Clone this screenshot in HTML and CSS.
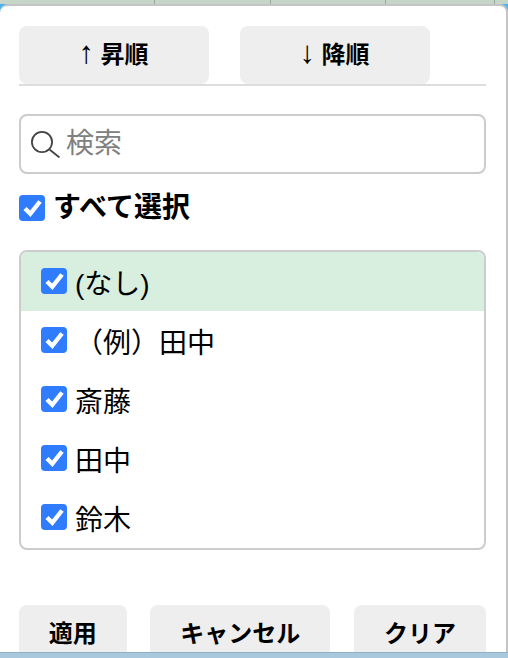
FILE: index.html
```html
<!DOCTYPE html>
<html lang="ja">
<head>
<meta charset="utf-8">
<title>フィルター</title>
<link rel="stylesheet" href="styles.css">
</head>
<body>
<div class="grid-strip">
  <span class="cell c1"></span><span class="cell c2"></span><span class="cell c3"></span><span class="cell c4"></span><span class="cell c5"></span>
</div>
<main class="panel">
  <div class="sort-row">
    <button class="btn sort-btn"><span class="arrow">↑</span> 昇順</button>
    <button class="btn sort-btn"><span class="arrow">↓</span> 降順</button>
  </div>
  <label class="search">
    <svg class="search-icon" viewBox="0 0 30 28" width="30" height="28" aria-hidden="true">
      <circle cx="11" cy="12" r="10.1" fill="none" stroke="#444" stroke-width="1.8"/>
      <path d="M18.5 19.5L28.5 27.5" fill="none" stroke="#444" stroke-width="1.8"/>
    </svg>
    <span class="placeholder">検索</span>
  </label>
  <label class="select-all"><input class="check" type="checkbox" checked><span>すべて選択</span></label>
  <div class="list">
    <label class="item selected"><input class="check" type="checkbox" checked><span>(なし)</span></label>
    <label class="item"><input class="check" type="checkbox" checked><span>（例）田中</span></label>
    <label class="item"><input class="check" type="checkbox" checked><span>斎藤</span></label>
    <label class="item"><input class="check" type="checkbox" checked><span>田中</span></label>
    <label class="item"><input class="check" type="checkbox" checked><span>鈴木</span></label>
  </div>
  <div class="actions">
    <button class="btn act-apply">適用</button>
    <button class="btn act-cancel">キャンセル</button>
    <button class="btn act-clear">クリア</button>
  </div>
</main>
<div class="footer-strip"></div>
</body>
</html>
```
FILE: styles.css
```css
* { box-sizing: border-box; }
html, body { margin: 0; padding: 0; height: 100%; }
body {
  width: 508px; height: 658px; overflow: hidden;
  background: #45b4ee;
  font-family: "Liberation Sans", "Noto Sans CJK JP", sans-serif;
  color: #000;
  display: flex; flex-direction: column;
}
.grid-strip { height: 4px; display: flex; background: #c6d6c8; flex: none; }
.cell { border-right: 1px solid #98a89c; height: 4px; }
.c1 { width: 155px; } .c2 { width: 116px; } .c3 { width: 115px; } .c4 { width: 109px; } .c5 { flex: 1; border-right: 0; }
.panel {
  height: 648px; flex: none; width: 508px;
  background: #fff;
  border-top: 2px solid #c4c4c4;
  border-right: 2px solid #c4c4c4;
  border-radius: 8px 8px 0 0;
  padding: 20px 20px 0 19px;
  display: flex; flex-direction: column;
  overflow: hidden;
}
.footer-strip {
  flex: none; height: 6px;
  background: #a9c7dd;
  border-top: 1px solid #8fb0c4;
}
.btn {
  border: 0; background: #eee; border-radius: 8px;
  font: bold 24px/1 "Liberation Sans", "Noto Sans CJK JP", sans-serif;
  color: #000; padding: 0; height: 58px;
}
.sort-row {
  display: flex; gap: 31px;
  border-bottom: 2px solid #ddd;
  height: 60px; flex: none;
}
.sort-btn { width: 190px; padding-bottom: 3px; }
.arrow {
  font-weight: normal; font-family: "Liberation Serif", serif; font-size: 31px; line-height: 24px; color: #000;
  margin-left: -1px;
}
.search {
  margin-top: 28px; height: 60px; flex: none;
  border: 2px solid #ccc; border-radius: 8px;
  display: flex; align-items: center; padding-left: 10px; gap: 5px;
}
.search-icon { flex: none; }
.placeholder { font-size: 28px; line-height: 1; color: #808080; }
.check {
  appearance: none; -webkit-appearance: none;
  margin: 0; width: 26px; height: 26px; flex: none;
  border-radius: 4px;
  background: #2f7cff url("data:image/svg+xml,%3Csvg xmlns='http://www.w3.org/2000/svg' viewBox='0 0 26 26'%3E%3Cpath d='M6 13.5L11.3 18.8L21 6.5' fill='none' stroke='%23fff' stroke-width='4.4'/%3E%3C/svg%3E") center / 26px 26px no-repeat;
}
.select-all {
  margin-top: 20px; display: flex; align-items: center; gap: 8px;
  font-size: 28px; line-height: 1; font-weight: bold; height: 28px; flex: none;
}
.list {
  margin-top: 28px; height: 300px; flex: none;
  border: 2px solid #ccc; border-radius: 8px; overflow: hidden;
  display: flex; flex-direction: column;
}
.item {
  height: 59px; flex: none; display: flex; align-items: center; gap: 8px;
  padding-left: 20px; font-size: 28px;
}
.item .check { margin-top: -1px; }
.selected { background: #d8efe0; }
.actions {
  margin-top: 55px; display: flex; justify-content: space-between; flex: none;
}
.act-apply { width: 107.5px; }
.act-cancel { width: 180px; }
.act-clear { width: 132px; }
```
